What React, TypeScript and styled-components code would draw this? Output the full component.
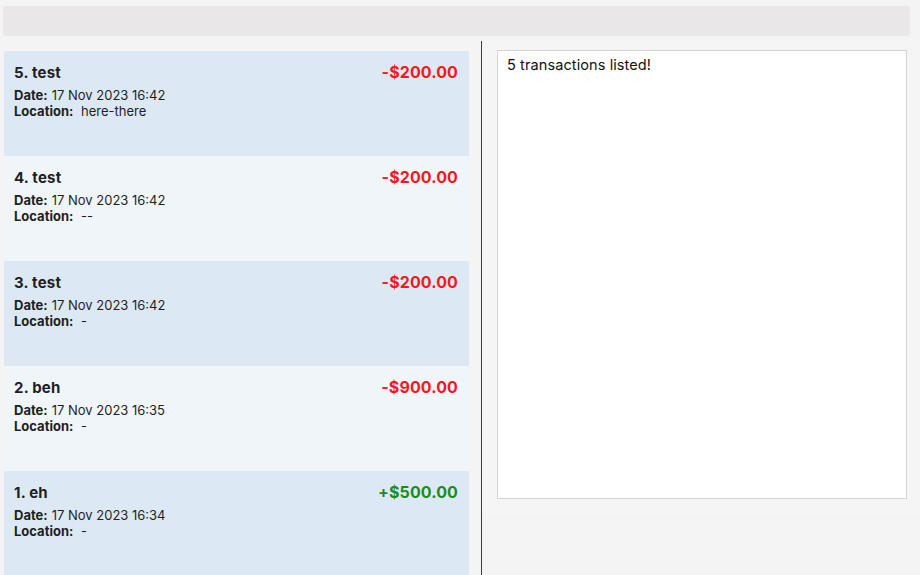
import React from "react";
import styled, { createGlobalStyle } from "styled-components";

const Global = createGlobalStyle`
  html, body { margin: 0; padding: 0; background: #f4f4f4; }
  body { font-family: Inter, "Open Sans", "Liberation Sans", sans-serif; overflow: hidden; }
  #root { width: 920px; height: 575px; }
`;

const Page = styled.div`
  width: 920px;
  height: 575px;
  display: flex;
  flex-direction: column;
  background: #f4f4f4;
`;

const TopBar = styled.div`
  margin: 6px 10px 0 3px;
  height: 30px;
  background: #e9e7e8;
  border-radius: 3px;
`;

const Main = styled.div`
  flex: 1;
  margin-top: 5px;
  display: flex;
  min-height: 0;
`;

const ListPane = styled.div`
  width: 477px;
  padding: 10px 0 0 4px;
  box-sizing: border-box;
  overflow: hidden;
`;

const List = styled.div`
  width: 465px;
  display: flex;
  flex-direction: column;
`;

const Card = styled.div<{ $alt: boolean }>`
  height: 105px;
  box-sizing: border-box;
  padding: 11px 11px 0 10px;
  background: ${(p) => (p.$alt ? "#f0f5fa" : "#dce9f4")};
  display: flex;
  flex-direction: column;
`;

const Header = styled.div`
  display: flex;
  justify-content: space-between;
  align-items: baseline;
  height: 22px;
`;

const Title = styled.span`
  font-size: 15px;
  font-weight: 700;
  letter-spacing: 0.2px;
  color: #1f1f1f;
`;

const Amount = styled.span<{ $positive: boolean }>`
  font-size: 16px;
  font-weight: 700;
  letter-spacing: 0.1px;
  color: ${(p) => (p.$positive ? "#1c8c1c" : "#f5191c")};
`;

const Line = styled.div`
  font-size: 13px;
  line-height: 16px;
  color: #1f1f1f;
`;

const FirstLine = styled(Line)`
  margin-top: 3px;
`;

const Label = styled.b`
  font-weight: 700;
  margin-right: 4px;
`;

const Divider = styled.div`
  width: 1px;
  background: #3a3a3a;
  margin-left: 4px;
`;

const ResultPane = styled.div`
  flex: 1;
  padding: 9px 13px 0 15px;
  height: 465px;
  background: #f5f5f5;
`;

const ResultBox = styled.div`
  height: 449px;
  background: #ffffff;
  border: 1px solid #d4d4d4;
  box-sizing: border-box;
  padding: 5px 9px;
  font-size: 14.5px;
  letter-spacing: 0.1px;
  color: #111;
`;

type Tx = { idx: number; name: string; amount: string; positive: boolean; date: string; location: string };

const txs: Tx[] = [
  { idx: 5, name: "test", amount: "-$200.00", positive: false, date: "17 Nov 2023 16:42", location: "here-there" },
  { idx: 4, name: "test", amount: "-$200.00", positive: false, date: "17 Nov 2023 16:42", location: "--" },
  { idx: 3, name: "test", amount: "-$200.00", positive: false, date: "17 Nov 2023 16:42", location: "-" },
  { idx: 2, name: "beh", amount: "-$900.00", positive: false, date: "17 Nov 2023 16:35", location: "-" },
  { idx: 1, name: "eh", amount: "+$500.00", positive: true, date: "17 Nov 2023 16:34", location: "-" },
];

export default function App() {
  return (
    <>
      <Global />
      <Page>
        <TopBar />
        <Main>
          <ListPane>
            <List>
              {txs.map((t, i) => (
                <Card key={t.idx} $alt={i % 2 === 1}>
                  <Header>
                    <Title>{t.idx}. {t.name}</Title>
                    <Amount $positive={t.positive}>{t.amount}</Amount>
                  </Header>
                  <FirstLine>
                    <Label>Date:</Label>{t.date}
                  </FirstLine>
                  <Line>
                    <Label>Location:</Label> {t.location}
                  </Line>
                </Card>
              ))}
            </List>
          </ListPane>
          <Divider />
          <ResultPane>
            <ResultBox>5 transactions listed!</ResultBox>
          </ResultPane>
        </Main>
      </Page>
    </>
  );
}
